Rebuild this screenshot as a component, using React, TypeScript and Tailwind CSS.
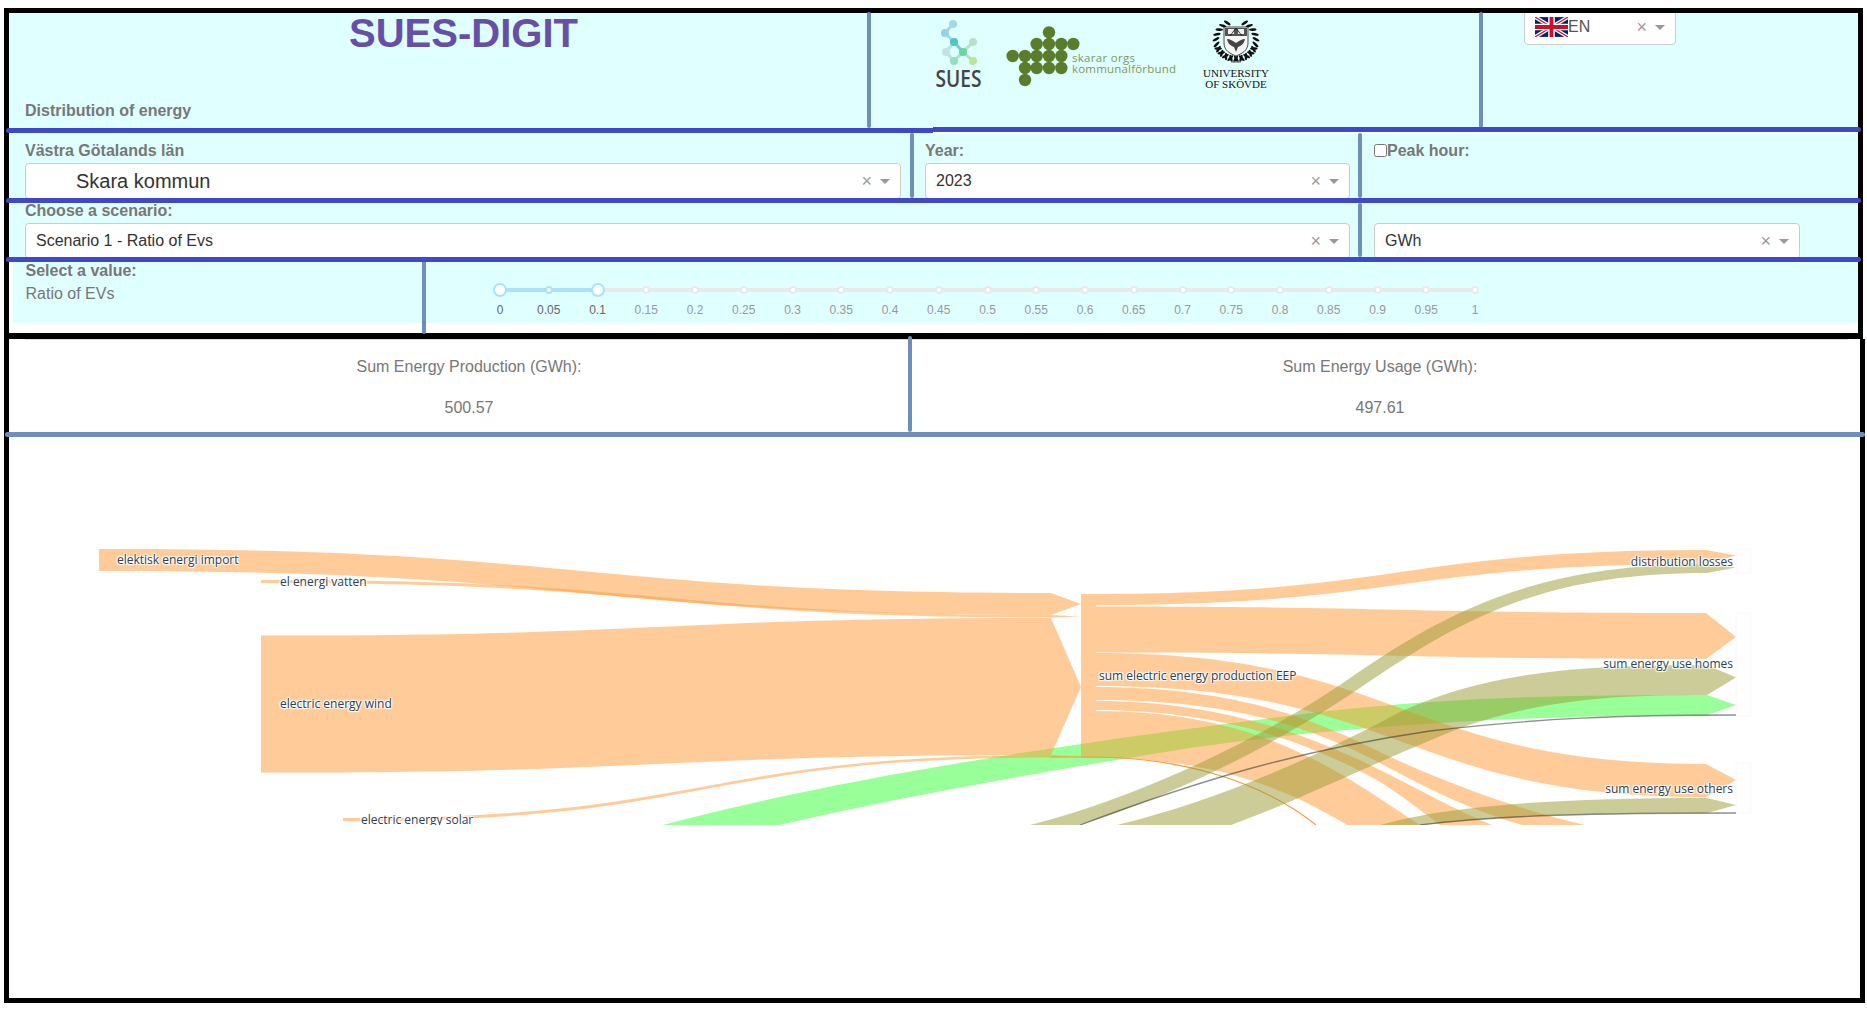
const marks = ['0', '0.05', '0.1', '0.15', '0.2', '0.25', '0.3', '0.35', '0.4', '0.45', '0.5', '0.55', '0.6', '0.65', '0.7', '0.75', '0.8', '0.85', '0.9', '0.95', '1'];

const skaraDots = [
  [447, 67],
  [410, 102], [447, 102], [484, 102], [520, 102],
  [338, 138], [375, 138], [410, 138], [447, 138], [484, 138],
  [375, 174], [410, 174], [447, 174], [484, 174],
  [375, 210],
];

const suesLines = [
  ['M953 24 L945 33 L954 42', '#a3d8e6'],
  ['M954 42 L963 52', '#6fd0c4'],
  ['M954 42 L946 52 L954 61', '#bde3e6'],
  ['M954 61 L963 52 L973 61', '#a9e4bc'],
  ['M963 52 L973 42', '#b5e3c4'],
];

const suesDots = [
  [953, 24, '#a3d8e6'], [945, 33, '#93d2e0'], [954, 42, '#4cc5c6'], [946, 52, '#bfe4e8'],
  [963, 52, '#66d6a2'], [973, 42, '#b5e3c4'], [973, 61, '#b6e69f'], [954, 61, '#8fdfc0'],
];

function Rule() {
  return <div className="relative z-10 -mx-[3px] h-[5px] rounded-full bg-[#3f48c8]" />;
}

function Divider() {
  return <div className="w-[4px] shrink-0 rounded-full bg-[#6e8fbd]" />;
}

function Select({ className, text, large }: { className: string; text: string; large?: boolean }) {
  return (
    <div className={`flex h-[36px] items-center rounded border border-[#ccc] bg-white pr-[10px] text-[#333] ${className}`}>
      <span className={large ? 'pl-[50px] text-[20px]' : 'pl-[10px] text-[16px]'}>{text}</span>
      <span className="ml-auto text-[18px] leading-none text-[#999]">×</span>
      <span className="ml-[8px] h-0 w-0 border-x-[5px] border-t-[5px] border-x-transparent border-t-[#999]" />
    </div>
  );
}

function UnionJack() {
  return (
    <svg viewBox="0 0 60 36" className="h-[20px] w-[33px] shrink-0">
      <rect width="60" height="36" fill="#012169" />
      <path d="M0 0 L60 36 M60 0 L0 36" stroke="#fff" strokeWidth="7" />
      <path d="M0 0 L60 36 M60 0 L0 36" stroke="#c8102e" strokeWidth="2.4" />
      <path d="M30 0 V36 M0 18 H60" stroke="#fff" strokeWidth="12" />
      <path d="M30 0 V36 M0 18 H60" stroke="#c8102e" strokeWidth="7" />
    </svg>
  );
}

function Wreath() {
  const leaves = [];
  for (let i = 0; i < 15; i++) {
    const a = (-64 + i * 15.5) * (Math.PI / 180);
    const x = Math.cos(a) * 20;
    const y = Math.sin(a) * 19;
    const deg = (a * 180) / Math.PI + 90;
    leaves.push(
      <ellipse key={`r${i}`} cx={1236 + x} cy={40 + y} rx="1.3" ry="3.8" transform={`rotate(${deg + 30} ${1236 + x} ${40 + y})`} fill="#111" />,
      <ellipse key={`l${i}`} cx={1236 - x} cy={40 + y} rx="1.3" ry="3.8" transform={`rotate(${-deg - 30} ${1236 - x} ${40 + y})`} fill="#111" />,
    );
  }
  return (
    <g>
      {leaves}
      <path d="M1224 27 H1248 V43 C1248 51 1241 54 1236 56 C1231 54 1224 51 1224 43 Z" fill="#f4f4f4" stroke="#222" strokeWidth="0.8" />
      <path d="M1225 28 H1247 V36 H1225 Z" fill="#555" />
      <path d="M1228 29 H1234 V34 H1228 Z M1238 29 H1244 V34 H1238 Z" fill="#eee" />
      <path d="M1236 28 L1242 36 M1230 36 L1236 28" stroke="#111" strokeWidth="0.8" />
      <path d="M1227 39 C1230 39 1233 41 1236 43 C1239 41 1242 39 1245 39 C1244 44 1241 46 1238 47 L1236 52 L1234 47 C1231 46 1228 44 1227 39 Z" fill="#444" />
      <path d="M1231 62 H1241" stroke="#777" strokeWidth="1.2" />
    </g>
  );
}

function Logos() {
  return (
    <svg viewBox="930 13 345 100" className="ml-[59px] h-[100px] w-[345px]">
      {suesLines.map(([d, c]) => (
        <path key={d} d={d} fill="none" stroke={c} strokeWidth="3" />
      ))}
      {suesDots.map(([x, y, c]) => (
        <circle key={`${x}-${y}`} cx={x as number} cy={y as number} r="4" fill={c as string} />
      ))}
      <text x="935.5" y="87" textLength="46" lengthAdjust="spacingAndGlyphs" className="fill-[#444] font-['Open_Sans'] text-[24px] font-semibold">SUES</text>
      {skaraDots.map(([x, y]) => (
        <circle key={`${x}-${y}`} cx={900 + x / 3} cy={10 + y / 3} r="6.2" fill="#5a7d2c" />
      ))}
      <text x="1072" y="61.5" textLength="63" className="fill-[#7d9a5a] font-['Open_Sans'] text-[11.5px]">skarar orgs</text>
      <text x="1072" y="73" textLength="104" className="fill-[#7d9a5a] font-['Open_Sans'] text-[11.5px]">kommunalförbund</text>
      <Wreath />
      <text x="1236" y="77" textAnchor="middle" className="fill-[#111] font-['Liberation_Serif'] text-[11px]">UNIVERSITY</text>
      <text x="1236" y="87.5" textAnchor="middle" className="fill-[#111] font-['Liberation_Serif'] text-[11px]">OF SKÖVDE</text>
    </svg>
  );
}

const orange = '#ff9933';
const olive = '#999933';
const labelClass = "fill-[#2a3f5f] font-['Open_Sans'] text-[12px] [text-shadow:1px_1px_1px_#fff,-1px_-1px_1px_#fff,1px_-1px_1px_#fff,-1px_1px_1px_#fff]";

function Sankey() {
  return (
    <svg viewBox="9 437 1851 388" className="block h-[388px] w-[1851px]">
      <path fill="#33ff33" fillOpacity="0.5" d="M663 825 C860 772 1130 735 1320 712 C1460 696 1580 695 1707 695 L1736 705 L1707 715 C1530 715 1350 725 1190 748 C1040 772 900 797 779 825 Z" />

      {/* green goes under everything, the overlaps mix the way they do in the chart */}
      <g fillOpacity="0.5" fill={orange}>
        <path d="M99 549 L114 549 C582 549 582 593 1051 593 L1081 604 L1051 615 C582 615 582 571 114 571 L99 571 Z" />
        <path d="M261 580 L276 580 C663 580 663 615 1051 615 L1081 616.5 L1051 617.5 C663 617.5 663 583 276 583 L261 583 Z" />
        <path d="M261 635.5 L276 635.5 C663 635.5 663 618 1051 618 L1081 687 L1051 755 C663 755 663 772.5 276 772.5 L261 772.5 Z" />
        <path d="M343 818 L358 818 C704 818 704 755 1051 755 L1081 756.5 L1051 757.5 C704 757.5 704 821 358 821 L343 821 Z" />
        <rect x="1081" y="594" width="15" height="164" />

        <path d="M1096 594 C1401 594 1401 550 1706 550 L1736 555.5 L1706 564 C1401 564 1401 605 1096 605 Z" />
        <path d="M1096 606.5 C1401 606.5 1401 613 1706 613 L1736 637 L1706 659 C1401 659 1401 652.5 1096 652.5 Z" />
        <path d="M1096 653 C1401 653 1401 764 1706 764 L1736 780 L1706 797 C1401 797 1401 686 1096 686 Z" />
        <path d="M1096 687 C1240 687 1320 722 1380 752 C1460 790 1530 812 1585 825 L1522 825 C1470 810 1420 785 1380 763 C1310 726 1230 700 1096 700 Z" />
        <path d="M1096 701 C1220 701 1310 735 1380 770 C1420 790 1460 812 1492 825 L1440 825 C1420 810 1400 794 1380 782 C1310 742 1220 710 1096 710 Z" />
        <path d="M1096 711 C1401 711 1401 914 1706 914 L1706 961 C1401 961 1401 758 1096 758 Z" />
      </g>
      <path d="M1051 757 H1096 C1180 758 1260 780 1316 825" fill="none" stroke="#f59a3c" strokeWidth="1.2" />

      <g fillOpacity="0.5" fill={olive}>
        <path d="M1030 825 C1130 800 1250 745 1337 687 C1440 615 1530 564 1707 564 L1736 567.5 L1707 573 C1540 573 1460 620 1357 690 C1260 755 1160 800 1080 825 Z" />
        <path d="M1117 825 C1220 800 1320 755 1400 712 C1490 670 1590 665 1707 665 L1736 677.5 L1707 695 C1610 695 1540 700 1460 728 C1380 760 1300 800 1231 825 Z" />
        <path d="M1380 825 C1450 805 1560 798 1707 798 L1736 805 L1707 813 C1600 813 1500 815 1423 825 Z" />
      </g>

      <g fill="none" stroke="#333333" strokeOpacity="0.55" strokeWidth="1.3">
        <path d="M1080 825 C1200 780 1300 750 1430 731 C1540 718 1620 715 1736 715" />
        <path d="M1420 825 C1500 815 1600 813 1736 813" />
      </g>

      <g fill="#000" fillOpacity="0.003" stroke="#000" strokeOpacity="0.025">
        <rect x="1736" y="549" width="15" height="24" />
        <rect x="1736" y="613" width="15" height="103" />
        <rect x="1736" y="763" width="15" height="50" />
      </g>

      <text x="117" y="564" className={labelClass}>elektisk energi import</text>
      <text x="280" y="585.5" className={labelClass}>el energi vatten</text>
      <text x="280" y="708" className={labelClass}>electric energy wind</text>
      <text x="361" y="823.5" className={labelClass}>electric energy solar</text>
      <text x="1099" y="680" className={labelClass}>sum electric energy production EEP</text>
      <text x="1733" y="566" textAnchor="end" className={labelClass}>distribution losses</text>
      <text x="1733" y="668" textAnchor="end" className={labelClass}>sum energy use homes</text>
      <text x="1733" y="793" textAnchor="end" className={labelClass}>sum energy use others</text>
    </svg>
  );
}

function Slider() {
  return (
    <div className="ml-[74px] w-[975px] pt-[26px]">
      <div className="relative h-[4px] rounded bg-[#e9e9e9]">
        <div className="absolute inset-y-0 left-0 w-[97.5px] bg-[#abe2fb]" />
        <div className="absolute inset-x-0 top-[2px] flex justify-between">
          {marks.map((m, i) => (
            <div key={m} className="flex h-0 w-0 items-center justify-center">
              {i === 0 || i === 2 ? (
                <span className="size-[14px] shrink-0 rounded-full border-2 border-[#abe2fb] bg-white" />
              ) : (
                <span className={`size-[8px] shrink-0 rounded-full border-2 bg-white ${i === 1 ? 'border-[#abe2fb]' : 'border-[#e9e9e9]'}`} />
              )}
            </div>
          ))}
        </div>
      </div>
      <div className="mt-[11px] flex justify-between text-[12px] leading-[14px]">
        {marks.map((m, i) => (
          <div key={m} className={`flex w-0 justify-center whitespace-nowrap ${i <= 2 ? 'text-[#666]' : 'text-[#999]'}`}>
            {m}
          </div>
        ))}
      </div>
    </div>
  );
}

export default function App() {
  return (
    <div className="h-[1009px] w-[1867px] overflow-hidden bg-white pl-[4px] pt-[8px] font-['Liberation_Sans',Arial,sans-serif] text-[16px] leading-[18px] text-[#777]">
      {/* filters */}
      <section className="box-border h-[331px] w-[1859px] border-x-[5px] border-b-[6px] border-t-[5px] border-black">
        <div className="flex h-[115px] bg-[#e0ffff]">
          <div className="flex w-[858px] flex-col">
            <h1 className="-mt-[3px] pl-[51px] text-center text-[40px] font-bold leading-[46px] text-[#674ea7]">SUES-DIGIT</h1>
            <div className="mt-auto pb-[8px] pl-[16px] font-bold">Distribution of energy</div>
          </div>
          <div className="-mt-[1px] flex"><Divider /></div>
          <div className="w-[608px]"><Logos /></div>
          <div className="-mt-[1px] flex"><Divider /></div>
          <div className="flex-1 overflow-hidden pl-[41px]">
            <div className="-mt-[4px] flex h-[36px] w-[152px] items-center rounded border border-[#ccc] bg-white pl-[10px] pr-[10px] text-[#555]">
              <UnionJack />
              <span>EN</span>
              <span className="ml-auto text-[18px] leading-none text-[#999]">×</span>
              <span className="ml-[8px] h-0 w-0 border-x-[5px] border-t-[5px] border-x-transparent border-t-[#999]" />
            </div>
          </div>
        </div>
        <div className="relative z-10 -mx-[3px] flex items-start">
          <div className="h-[5px] w-[927px] rounded-l-full bg-[#3f48c8]" />
          <div className="-mt-[1px] h-[5px] flex-1 rounded-r-full bg-[#3f48c8]" />
        </div>

        <div className="flex h-[65px] bg-[#e0ffff]">
          <div className="h-full w-[901px] overflow-hidden pl-[16px] pt-[9px]">
            <div className="font-bold">Västra Götalands län</div>
            <Select className="mt-[3px] w-[876px]" text="Skara kommun" large />
          </div>
          <Divider />
          <div className="h-full w-[444px] overflow-hidden pl-[11px] pt-[9px]">
            <div className="font-bold">Year:</div>
            <Select className="mt-[3px] w-[425px]" text="2023" />
          </div>
          <Divider />
          <div className="flex h-full items-start pl-[12px] pt-[9px] font-bold">
            <input type="checkbox" className="mt-[2px] size-[13px]" readOnly />
            <span>Peak hour:</span>
          </div>
        </div>
        <Rule />

        <div className="flex h-[54px] bg-[#e0ffff]">
          <div className="h-full w-[1349px] pl-[16px]">
            <div className="relative z-20 -mt-[1px] font-bold">Choose a scenario:</div>
            <div className="h-[37px] overflow-hidden pt-[3px]">
              <Select className="w-[1325px]" text="Scenario 1 - Ratio of Evs" />
            </div>
          </div>
          <Divider />
          <div className="h-full overflow-hidden pl-[12px] pt-[20px]">
            <Select className="w-[426px]" text="GWh" />
          </div>
        </div>
        <Rule />

        <div className="ml-[3.5px] flex h-[61px] bg-[#e0ffff]">
          <div className="w-[409.5px] pl-[13px]">
            <div className="font-bold">Select a value:</div>
            <div className="mt-[5px]">Ratio of EVs</div>
          </div>
          <div className="-mt-[2px] flex h-[74px]"><Divider /></div>
          <Slider />
        </div>
      </section>

      {/* totals and chart */}
      <section className="box-border h-[664px] w-[1861px] border-x-[5px] border-b-[5px] border-black">
        <div className="ml-[16px] h-px w-[1823px] bg-[#ddd]" />
        <div className="flex h-[92px]">
          <div className="w-[899px] pl-[21px] pt-[18px] text-center">
            <div>Sum Energy Production (GWh):</div>
            <div className="mt-[23px]">500.57</div>
          </div>
          <div className="-mt-[4px] flex"><Divider /></div>
          <div className="flex-1 pr-[12px] pt-[18px] text-center">
            <div>Sum Energy Usage (GWh):</div>
            <div className="mt-[23px]">497.61</div>
          </div>
        </div>
        <div className="relative z-10 -mx-[4px] -mr-[5px] h-[5px] rounded-full bg-[#6e8fbd]" />
        <Sankey />
      </section>
    </div>
  );
}
